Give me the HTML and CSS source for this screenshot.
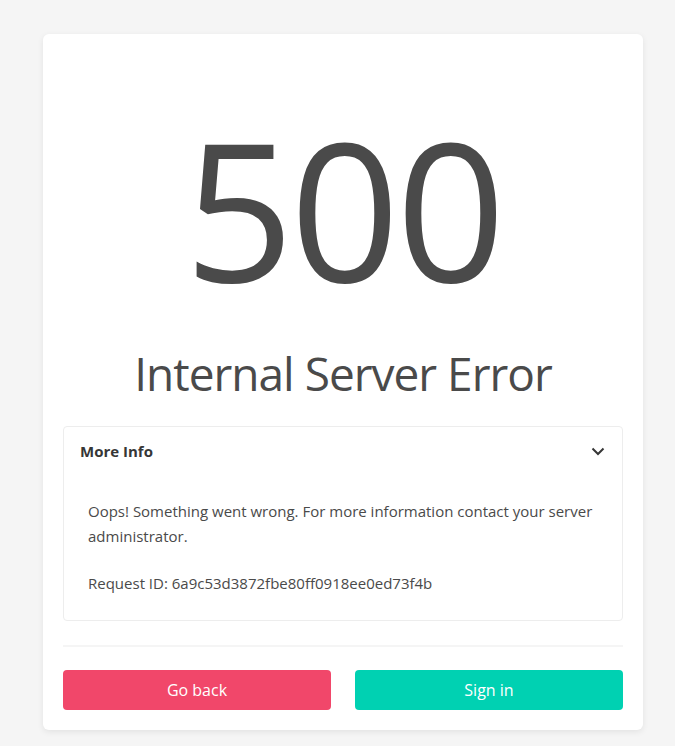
FILE: index.html
```html
<!DOCTYPE html>
<html lang="en">
<head>
    <meta charset="UTF-8">
    <meta name="viewport" content="width=device-width, initial-scale=1.0">
    <title>500 - Internal Server Error</title>
    <link rel="stylesheet" href="styles.css">
</head>
<body>
    <div class="card">
        <div class="code">500</div>
        <h1 class="title">Internal Server Error</h1>

        <div class="info">
            <div class="info-header">
                <span>More Info</span>
                <svg class="chevron" width="14" height="9" viewBox="0 0 14 9">
                    <path d="M1.5 1.5 L7 7 L12.5 1.5" fill="none" stroke="#363636" stroke-width="2"/>
                </svg>
            </div>
            <div class="info-body">
                <p>Oops! Something went wrong. For more information contact your server administrator.</p>
                <p>Request ID: 6a9c53d3872fbe80ff0918ee0ed73f4b</p>
            </div>
        </div>

        <hr class="divider">

        <div class="buttons">
            <button class="btn btn-danger">Go back</button>
            <button class="btn btn-primary">Sign in</button>
        </div>
    </div>
</body>
</html>
```

FILE: styles.css
```css
body {
    font-family: "Open Sans", "Noto Sans", sans-serif;
    margin: 0;
    padding: 34px 0 16px 43px;
    background-color: #f5f5f5;
    color: #4a4a4a;
}
.card {
    width: 560px;
    padding: 20px;
    background-color: white;
    border-radius: 6px;
    box-shadow: 0 2px 6px rgba(0,0,0,0.08);
}
.code {
    font-size: 192px;
    font-weight: 500;
    letter-spacing: -4px;
    line-height: 1;
    text-align: center;
    margin-top: 58px;
    color: #4a4a4a;
}
.title {
    font-size: 46px;
    font-weight: 400;
    letter-spacing: -1px;
    text-align: center;
    margin: 42px 0 25px;
    line-height: 1.2;
    color: #4a4a4a;
}
.info {
    border: 1px solid #ededed;
    border-radius: 4px;
}
.info-header {
    display: flex;
    justify-content: space-between;
    align-items: center;
    padding: 14px 16px 10px;
    font-size: 15px;
    font-weight: 700;
    color: #363636;
}
.chevron {
    margin-right: 1px;
}
.info-body {
    padding: 28px 24px 24px;
    font-size: 15px;
    line-height: 25px;
}
.info-body p {
    margin: 0 0 22px;
}
.info-body p:last-child {
    margin-bottom: 0;
}
.divider {
    border: none;
    height: 2px;
    background-color: #f5f5f5;
    margin: 24px 0 23px;
}
.buttons {
    display: flex;
    gap: 24px;
}
.btn {
    flex: 1;
    height: 40px;
    border: none;
    border-radius: 4px;
    color: white;
    font-family: inherit;
    font-size: 16px;
    cursor: pointer;
}
.btn-danger {
    background-color: #f1476a;
}
.btn-primary {
    background-color: #00d1b2;
}
```
